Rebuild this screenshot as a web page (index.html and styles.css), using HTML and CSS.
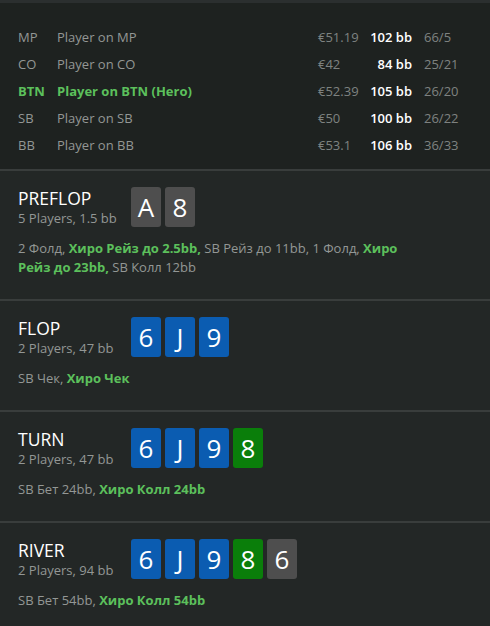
FILE: index.html
```html
<!DOCTYPE html>
<html lang="ru">
<head>
<meta charset="utf-8">
<link rel="stylesheet" href="styles.css">
</head>
<body>
<div class="topbar"></div>
<section class="players">
  <div class="prow"><span class="pos">MP</span><span class="name">Player on MP</span><span class="stack">€51.19</span><span class="bb">102 bb</span><span class="stat">66/5</span></div>
  <div class="prow"><span class="pos">CO</span><span class="name">Player on CO</span><span class="stack">€42</span><span class="bb">84 bb</span><span class="stat">25/21</span></div>
  <div class="prow hero"><span class="pos">BTN</span><span class="name">Player on BTN (Hero)</span><span class="stack">€52.39</span><span class="bb">105 bb</span><span class="stat">26/20</span></div>
  <div class="prow"><span class="pos">SB</span><span class="name">Player on SB</span><span class="stack">€50</span><span class="bb">100 bb</span><span class="stat">26/22</span></div>
  <div class="prow"><span class="pos">BB</span><span class="name">Player on BB</span><span class="stack">€53.1</span><span class="bb">106 bb</span><span class="stat">36/33</span></div>
</section>

<section class="street">
  <div class="head">
    <div class="titles"><div class="title">PREFLOP</div><div class="sub">5 Players, 1.5 bb</div></div>
    <div class="cards"><span class="card grey">A</span><span class="card grey">8</span></div>
  </div>
  <p class="actions">2 Фолд, <b>Хиро Рейз до 2.5bb,</b> SB Рейз до 11bb, 1 Фолд, <b>Хиро Рейз до 23bb,</b> SB Колл 12bb</p>
</section>

<section class="street">
  <div class="head">
    <div class="titles"><div class="title">FLOP</div><div class="sub">2 Players, 47 bb</div></div>
    <div class="cards"><span class="card blue">6</span><span class="card blue">J</span><span class="card blue">9</span></div>
  </div>
  <p class="actions">SB Чек, <b>Хиро Чек</b></p>
</section>

<section class="street">
  <div class="head">
    <div class="titles"><div class="title">TURN</div><div class="sub">2 Players, 47 bb</div></div>
    <div class="cards"><span class="card blue">6</span><span class="card blue">J</span><span class="card blue">9</span><span class="card green">8</span></div>
  </div>
  <p class="actions">SB Бет 24bb, <b>Хиро Колл 24bb</b></p>
</section>

<section class="street">
  <div class="head">
    <div class="titles"><div class="title">RIVER</div><div class="sub">2 Players, 94 bb</div></div>
    <div class="cards"><span class="card blue">6</span><span class="card blue">J</span><span class="card blue">9</span><span class="card green">8</span><span class="card grey">6</span></div>
  </div>
  <p class="actions">SB Бет 54bb, <b>Хиро Колл 54bb</b></p>
</section>
</body>
</html>
```

FILE: styles.css
```css
html, body {
  margin: 0;
  padding: 0;
}
body {
  background: #232726;
  font-family: "Open Sans", "Noto Sans", sans-serif;
  font-size: 13px;
  color: #8e9290;
  overflow: hidden;
}
.topbar {
  height: 3px;
  background: #2b2f2f;
}
.players {
  background: #1e2220;
  padding: 21px 0 10px 18px;
  border-bottom: 2px solid #393d3c;
}
.prow {
  display: grid;
  grid-template-columns: 39px 261px 42px 52px auto;
  height: 27px;
  align-items: center;
  line-height: 27px;
}
.pos, .name { color: #939795; }
.stack { color: #7e8280; }
.bb { color: #ffffff; text-align: right; font-weight: 600; white-space: nowrap; }
.stat { color: #7e8280; padding-left: 12px; }
.hero .pos, .hero .name { color: #5cc05c; font-weight: 700; }

.street {
  padding: 16px 18px 22px 18px;
  border-bottom: 2px solid #393d3c;
}
.street:last-child { border-bottom: none; }
.head {
  display: flex;
  align-items: center;
}
.titles {
  width: 113px;
}
.title {
  color: #ffffff;
  font-size: 17.5px;
  line-height: 22px;
}
.sub {
  color: #939795;
  font-size: 13px;
  line-height: 18px;
}
.cards {
  display: flex;
  gap: 4px;
}
.card {
  width: 30px;
  height: 40px;
  border-radius: 3px;
  color: #ffffff;
  font-size: 26px;
  line-height: 40px;
  text-align: center;
}
.card.grey { background: #4e4e4e; }
.card.blue { background: #0b5cb1; }
.card.green { background: #0a7e0a; }
.actions {
  margin: 12px 0 0 0;
  line-height: 19px;
  color: #939795;
  max-width: 400px;
}
.actions b {
  color: #5cc05c;
  font-weight: 700;
}
```
